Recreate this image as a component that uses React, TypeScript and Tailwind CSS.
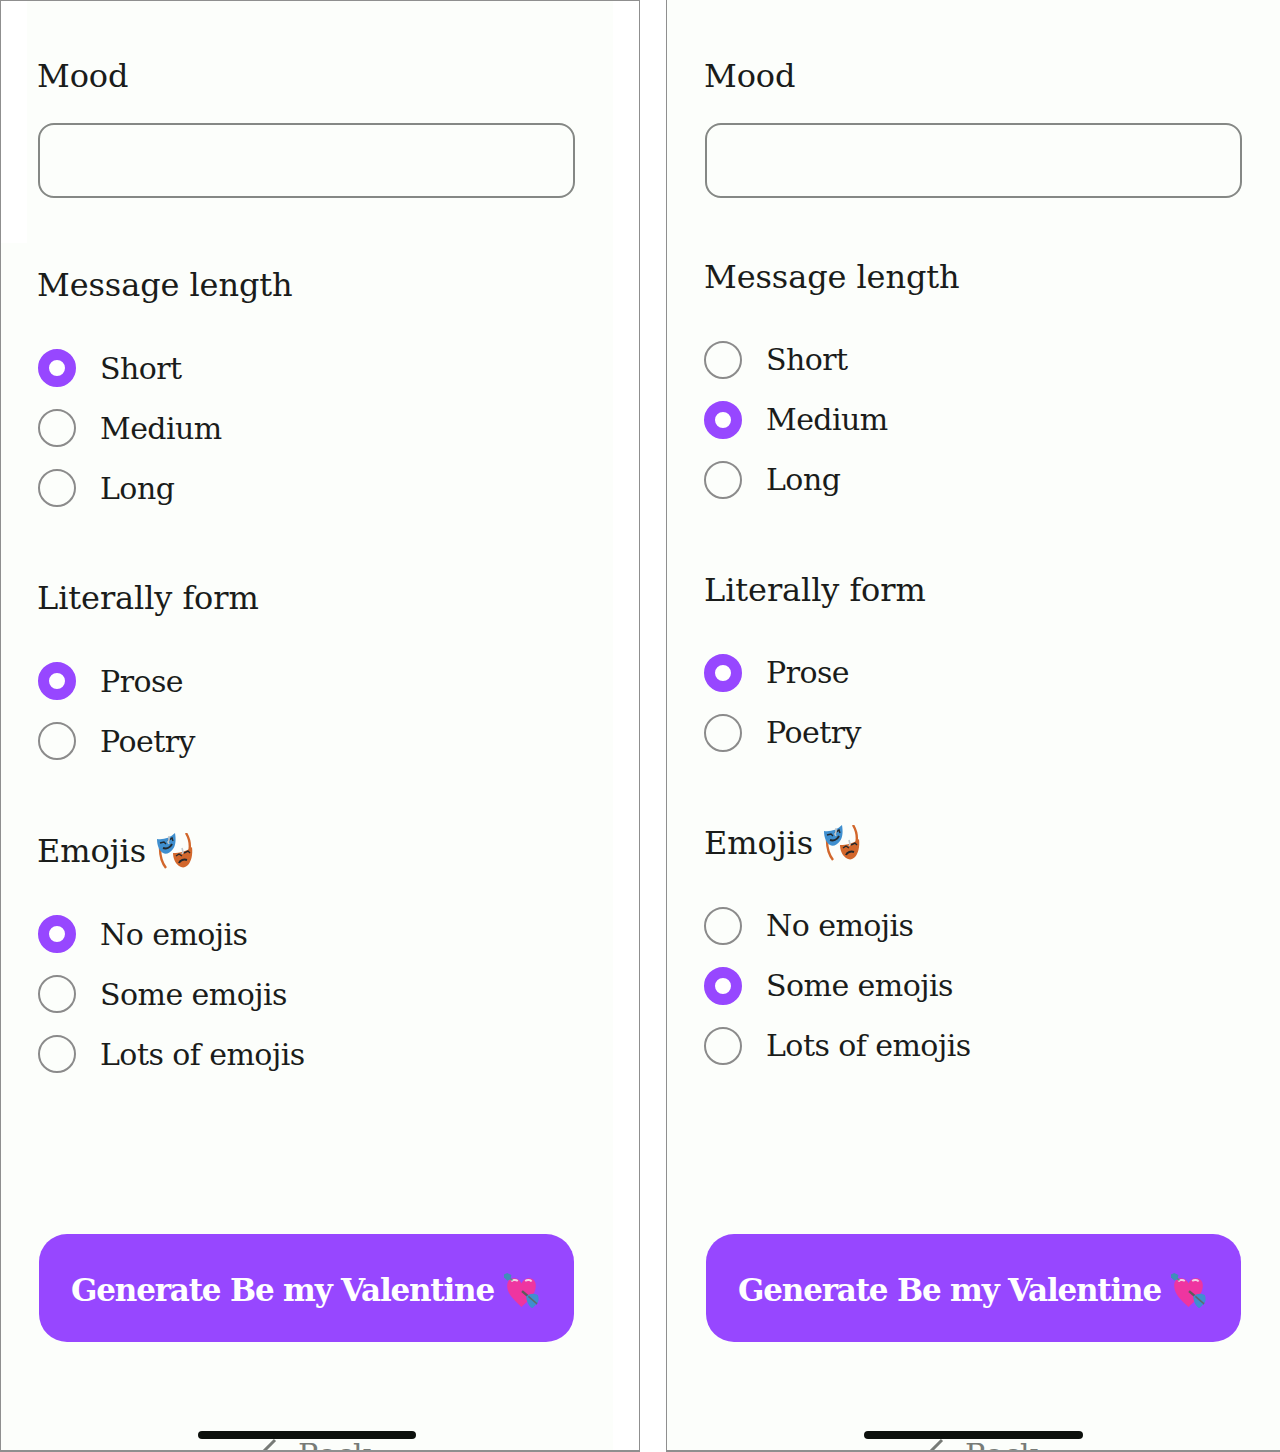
import React from 'react';

const MasksIcon = () => (
  <svg width="36" height="36" viewBox="0 0 36 36" className="shrink-0">
    <path d="M29 0c3 5 5 12 3 20" fill="none" stroke="#d2672c" strokeWidth="2.4" />
    <path d="M3 15c0 8 2 15 6 20" fill="none" stroke="#d2672c" strokeWidth="2.4" />
    <path d="M16 20c7 0 14-2 19-6 1 8-1 15-4 18-3 3-6 3-9 1-4-3-6-8-6-13z" fill="#d2672c" />
    <path d="M0 6c6 1 13-1 18-6 1 6 1 12-2 16-3 4-7 6-10 4C2 18 0 12 0 6z" fill="#3f8fcf" />
    <path d="M3 10l4-1 2 2M11 8l4-3 1 3" stroke="#23282c" strokeWidth="1.4" fill="none" />
    <path d="M6 15c3 1 7 0 9-4" stroke="#23282c" strokeWidth="2" fill="none" />
    <path d="M19 23l3-2 3 2M27 20l4-2 2 2" stroke="#23282c" strokeWidth="1.4" fill="none" />
    <path d="M22 30c1-3 5-4 8-3" stroke="#23282c" strokeWidth="2" fill="none" />
    <path d="M12 3l0 4-1 2 1 2M25 15l1 4-1 2" stroke="#c3c9cc" strokeWidth="1.6" fill="none" />
  </svg>
);

const HeartArrowIcon = () => (
  <svg width="35" height="35" viewBox="0 0 33 33" className="shrink-0">
    <path d="M16.5 32C10 26 3 20 3 12c0-5 3-7 6.500-7 3 0 6 2 7 5 1-3 4-5 7-5 3.500 0 6.500 2 6.500 7 0 8-7 14-13.500 20z" fill="#ee35a0" />
    <path d="M7 8c1-1.500 4-2 6-.5M20 7.500c2-1.500 5-1 6 .5" stroke="#f4d4e6" strokeWidth="1.800" fill="none" />
    <path d="M3 3l5 4" stroke="#5b8a8a" strokeWidth="1.500" />
    <path d="M0 1.500l3-1.500 4 2-1 4-3 1-3-3z" fill="#3f8fb8" />
    <path d="M17 17l14 12" stroke="#5c5c5c" strokeWidth="2.200" />
    <path d="M21 22c4-3 8-3 11-1 1 3 1 6-1 8l-4 4c-3 0-6-6-6-11z" fill="#3f8fcf" />
    <path d="M23 22l8 7" stroke="#5c6a6a" strokeWidth="1.500" />
  </svg>
);

const Radio = ({ label, checked, first }: { label: string; checked?: boolean; first?: boolean }) => (
  <div className="flex h-[60px] items-center gap-[24px]">
    {checked ? (
      <span className="h-[38px] w-[38px] rounded-full border-[11px] border-[#9747ff] bg-white" />
    ) : (
      <span className="h-[38px] w-[38px] rounded-full border-2 border-[#8b8b8b]" />
    )}
    <span className={`${first ? 'pt-px' : ''} text-[30px] leading-[40px] tracking-[-0.55px] text-[#1a1c1a]`}>{label}</span>
  </div>
);

const Group = ({ title, icon, options, selected, first }: { title: string; icon?: React.ReactNode; options: string[]; selected: string; first?: boolean }) => (
  <div>
    <div className={`mb-[33px] flex h-[40px] items-center gap-[11px] text-[32px] tracking-[-0.1px] text-[#1a1c1a] ${first ? '-ml-px' : ''}`}>
      {title}
      {icon}
    </div>
    {options.map(o => (
      <Radio key={o} first={first} label={o} checked={o === selected} />
    ))}
  </div>
);

const Phone = ({ first, lengthSel, emojiSel }: { first?: boolean; lengthSel: string; emojiSel: string }) => (
  <div className={`relative h-[1452px] overflow-hidden border-b-2 border-l border-[#8f8f8f] ${first ? 'w-[640px] border-t border-r bg-white' : 'flex-1 bg-[#fcfefb]'}`}>
    <div className={first ? 'mx-[26px] h-[242px] bg-[#fcfefb] px-[11px] pt-[55px]' : 'w-[613px] pl-[38px] pt-[56px]'}>
      <div className="mb-[27px] -ml-px flex h-[40px] items-center text-[32px] tracking-[-0.1px] text-[#1a1c1a]">Mood</div>
      <div className="h-[75px] w-[537px] rounded-[16px] border-2 border-[#858885]" />
    </div>
    <div className={`${first ? 'w-[612px] bg-[#fcfefb] pt-[22px]' : 'w-[613px] pt-[59px]'} flex flex-col gap-[60px] pl-[37px]`}>
      <Group first={first} title="Message length" options={['Short', 'Medium', 'Long']} selected={lengthSel} />
      <Group first={first} title="Literally form" options={['Prose', 'Poetry']} selected="Prose" />
      <Group first={first} title="Emojis" icon={<MasksIcon />} options={['No emojis', 'Some emojis', 'Lots of emojis']} selected={emojiSel} />
    </div>
    <div className={first ? 'w-[612px] bg-[#fcfefb] pl-[38px] pt-[150px]' : 'w-[613px] pl-[39px] pt-[158px]'}>
      <button className="flex h-[108px] w-[535px] items-center gap-[10px] rounded-[28px] bg-[#9747ff] pl-[32px] pt-[5px] text-[31px] font-bold tracking-[-1.2px] text-white">
        Generate Be my Valentine
        <HeartArrowIcon />
      </button>
      <div className={`${first ? 'ml-[159px] w-[218px]' : 'ml-[158px] w-[219px]'} mt-[89px] h-[8px] rounded-full bg-[#0c100c]`} />
      <div className="ml-[219px] -mt-[5px] flex h-[40px] items-center gap-[20px] text-[30px] tracking-[-0.6px] text-[#777b77]">
        <svg width="20" height="32" viewBox="0 0 20 32" fill="none" stroke="#777b77" strokeWidth="3"><path d="M17 2L3 16l14 14" /></svg>
        Back
      </div>
    </div>
  </div>
);

export default function App() {
  return (
    <div className="flex h-[1452px] w-[1280px] gap-[26px] overflow-hidden bg-white font-['DejaVu_Serif',serif]">
      <Phone first lengthSel="Short" emojiSel="No emojis" />
      <Phone lengthSel="Medium" emojiSel="Some emojis" />
    </div>
  );
}
